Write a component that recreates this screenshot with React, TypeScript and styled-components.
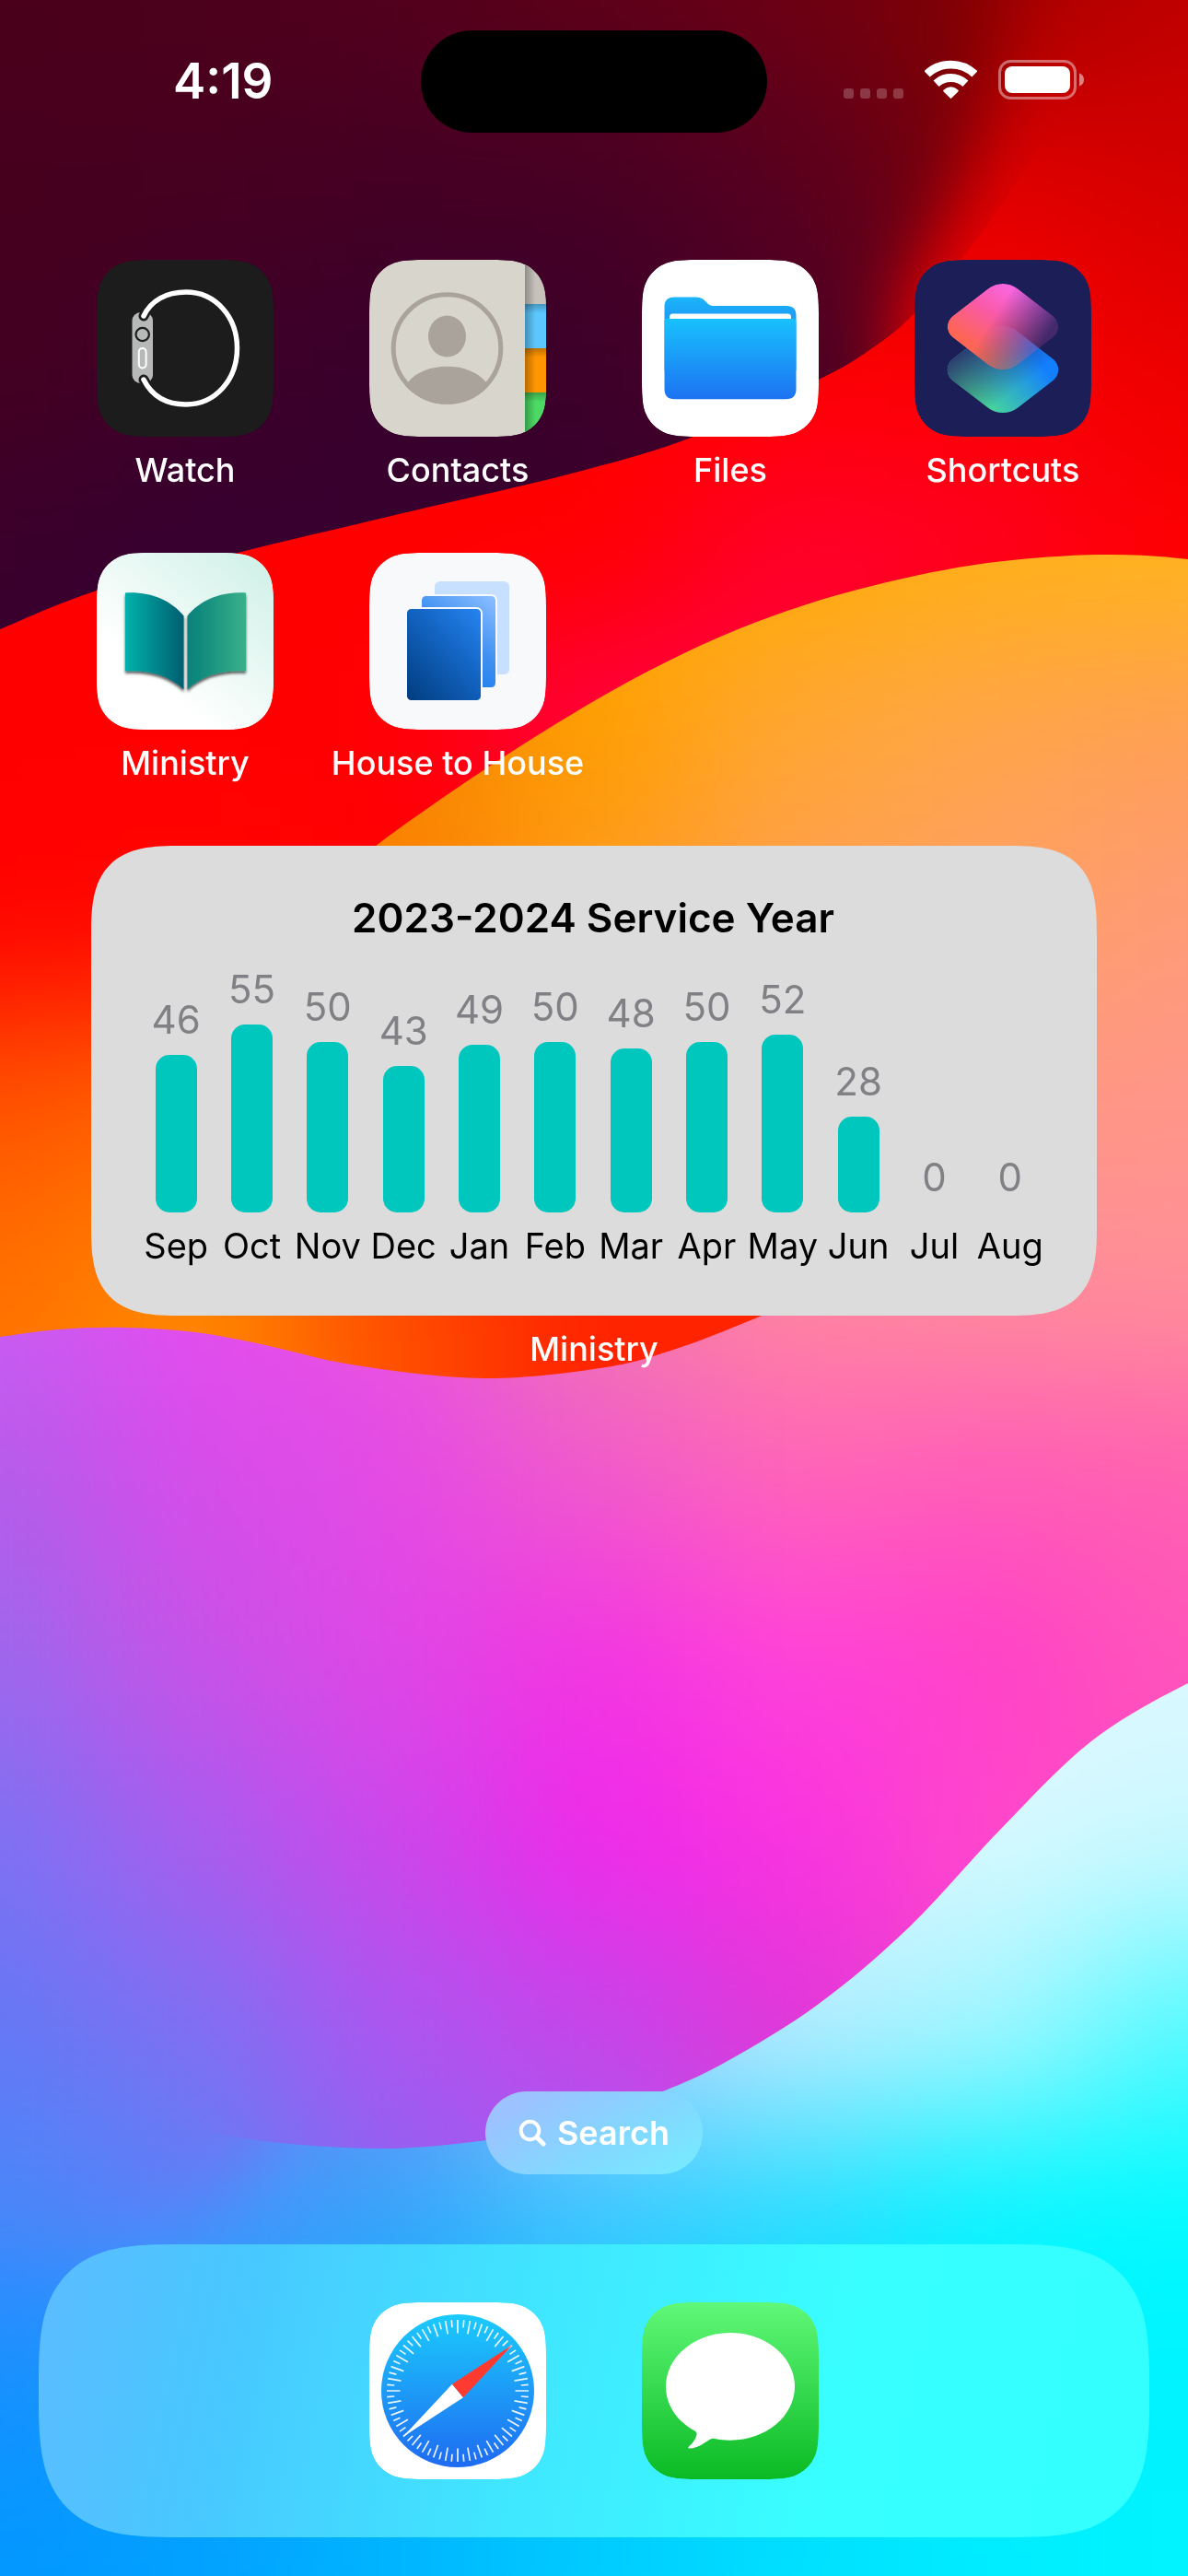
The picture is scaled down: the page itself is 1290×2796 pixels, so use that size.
import React from "react";
import styled, { createGlobalStyle, css } from "styled-components";

/* ---------- shared styles ---------- */

const GlobalStyle = createGlobalStyle`
  *, *::before, *::after { box-sizing: border-box; }
  html, body { margin: 0; padding: 0; }
  body {
    background: #1c9cff;
    font-family: Inter, "Liberation Sans", sans-serif;
    -webkit-font-smoothing: antialiased;
  }
  button { font: inherit; color: inherit; background: none; border: 0; padding: 0; cursor: pointer; }
`;

const smoothCorners = (radius: number, wide: number) => css`
  border-radius: ${radius}px;
  @supports (corner-shape: squircle) {
    border-radius: ${wide}px;
    corner-shape: superellipse(1.56);
  }
`;

/* ---------- wallpaper ---------- */

const WallpaperSvg = styled.svg`
  position: fixed;
  inset: 0;
  width: 100%;
  height: 100%;
  z-index: -1;
`;

const MESH_X = [-215, 0, 215, 430, 645, 860, 1075, 1290, 1505];

type MeshRow = { y: number; colors: string[] };

const row = (y: number, ...colors: string[]): MeshRow => ({ y, colors });

const embers: MeshRow[] = [
  row(-200, "#ff0000", "#ff0000", "#ff0000", "#ff0000", "#900000", "#a00000", "#c00000"),
  row(0, "#ff0000", "#ff0000", "#ff0000", "#ff0000", "#900000", "#a40000", "#c00000"),
  row(200, "#ff0000", "#ff0000", "#ff0000", "#ff0000", "#c80000", "#e40000", "#d40000"),
  row(400, "#ff0000", "#ff0000", "#ff0000", "#ff0000", "#ff0000", "#fc0000", "#ec0000"),
  row(600, "#ff0000", "#ff0000", "#ff0000", "#ff0000", "#ff002c", "#ff0020", "#ff0000"),
  row(800, "#ff0000", "#ff0000", "#ff0004", "#ff0048", "#ff0040", "#ff0000", "#ff0000"),
  row(1000, "#ff0200", "#ff0600", "#ff0000", "#ff0000", "#ff0000", "#ff0000", "#ff0000"),
  row(1200, "#ff5400", "#ff6800", "#ff3000", "#ff2000", "#ff2000", "#ff2000", "#ff2000"),
  row(1400, "#ff7000", "#ff8a00", "#ff4e00", "#ff2200", "#ff2400", "#ff2400", "#ff2400"),
  row(1600, "#ff7800", "#ff8a00", "#ff4e00", "#ff2200", "#ff2400", "#ff2400", "#ff2400"),
];

const dusk: MeshRow[] = [
  row(-200, "#4a001a", "#4c001a", "#54001a", "#600018", "#700010", "#800000", "#900000"),
  row(0, "#4a001a", "#4c001a", "#52001c", "#5e0018", "#6c0014", "#840000", "#900000"),
  row(200, "#46001e", "#460020", "#440024", "#460024", "#560020", "#7c0008", "#900000"),
  row(400, "#440020", "#3e0028", "#38002c", "#3c002a", "#4c0024", "#680018", "#900000"),
  row(600, "#3a002c", "#360030", "#36002e", "#38002c", "#3c002a", "#500020", "#900000"),
  row(800, "#3a0030", "#360030", "#36002e", "#38002c", "#3c002a", "#500020", "#900000"),
];

const sunset: MeshRow[] = [
  row(400, "#ff9000", "#ff9000", "#ffa000", "#ffa800", "#ffaa08", "#ffb018", "#ffb61a"),
  row(600, "#ff9000", "#ff9000", "#fc8c00", "#ffa800", "#ffaa08", "#ffb018", "#ffb41c"),
  row(800, "#ff8000", "#ff8000", "#f48200", "#ff9e00", "#ffa636", "#ffa44c", "#ff9e58"),
  row(1000, "#ff8000", "#ff8000", "#ff8000", "#ff9a20", "#ff9e50", "#ffa064", "#ff9a78"),
  row(1200, "#d060f0", "#e050e8", "#f060c0", "#ff8a80", "#ff9478", "#ff9680", "#ff968a"),
  row(1400, "#cc5cf4", "#e64cf0", "#ec54e0", "#f278ac", "#ff86a0", "#ff8c9c", "#ff8e98"),
  row(1600, "#b45cea", "#d64cea", "#e44ae4", "#f05acc", "#ff64b8", "#ff5cb8", "#ff60b0"),
  row(1800, "#9c68ec", "#c852e8", "#e046e6", "#f234e2", "#ff42da", "#ff40c8", "#ff56ba"),
  row(2000, "#7c72f4", "#a85cee", "#cc46ea", "#f028ea", "#fa32e0", "#ff48cc", "#ff4cc0"),
  row(2200, "#6478f4", "#7e70f2", "#ac56f0", "#c446ea", "#e036d8", "#f044cc", "#f044cc"),
  row(2400, "#4888fa", "#5c80f6", "#9060f0", "#a858f0", "#c84ce0", "#d044d8", "#d044d8"),
  row(2600, "#2890ff", "#4888fa", "#9060f0", "#a858f0", "#c84ce0", "#d044d8", "#d044d8"),
];

const lagoon: MeshRow[] = [
  row(1600, "#6478f4", "#6478f4", "#7080f4", "#a0c0ff", "#d8f6ff", "#dcf8ff", "#dcf8ff"),
  row(1800, "#6478f4", "#6478f4", "#7080f4", "#a0c0ff", "#d8f6ff", "#dcf8ff", "#dcf8ff"),
  row(2000, "#6478f4", "#6478f4", "#7080f4", "#a8c4ff", "#d0f4ff", "#d8f8ff", "#ccf8ff"),
  row(2200, "#5e7ef6", "#6880f6", "#7090f6", "#a4caff", "#b8ecff", "#a4f6ff", "#54faff"),
  row(2400, "#4088fc", "#4892fa", "#38a4fa", "#40c8ff", "#2cdcff", "#08f4ff", "#00fcff"),
  row(2600, "#1490ff", "#10a0ff", "#00b0ff", "#00c8ff", "#00dcff", "#00f0ff", "#00f2ff"),
  row(2800, "#0098ff", "#00a0ff", "#00b6ff", "#00ccff", "#00e0ff", "#00ecff", "#00f4ff"),
  row(3000, "#0098ff", "#00a0ff", "#00b6ff", "#00ccff", "#00e0ff", "#00ecff", "#00f4ff"),
];

type Point = [number, number];

/* Catmull-Rom spline through the given points, as cubic segments. */
function spline(points: Point[]): string {
  let d = `M${points[0][0]} ${points[0][1]}`;
  for (let i = 0; i < points.length - 1; i++) {
    const p0 = points[Math.max(i - 1, 0)];
    const p1 = points[i];
    const p2 = points[i + 1];
    const p3 = points[Math.min(i + 2, points.length - 1)];
    const c1 = [p1[0] + (p2[0] - p0[0]) / 6, p1[1] + (p2[1] - p0[1]) / 6];
    const c2 = [p2[0] - (p3[0] - p1[0]) / 6, p2[1] - (p3[1] - p1[1]) / 6];
    d += `C${c1[0]} ${c1[1]} ${c2[0]} ${c2[1]} ${p2[0]} ${p2[1]}`;
  }
  return d;
}

const duskEdge: Point[] = [
  [0, 683], [105, 641], [258, 600], [425, 560], [620, 514], [753, 474], [889, 412], [944, 380], [993, 340], [1060, 260], [1130, 160],
];

const sunsetTop: Point[] = [
  [1390, 625], [1290, 607], [1194, 602], [1081, 610], [985, 627], [882, 654], [780, 692], [684, 739], [600, 788], [528, 834], [462, 879], [407, 919], [360, 960],
];

const sunsetBottom: Point[] = [
  [900, 1396], [827, 1428], [740, 1462], [658, 1484], [526, 1496], [387, 1482], [288, 1460], [212, 1446], [136, 1441], [64, 1443], [0, 1451],
];

const lagoonEdge: Point[] = [
  [1380, 1792], [1290, 1827], [1185, 1890], [1086, 1986], [987, 2092], [889, 2175], [790, 2237], [717, 2271], [625, 2303], [528, 2323], [403, 2332], [247, 2318], [110, 2280], [0, 2230],
];

function Mesh({ rows }: { rows: MeshRow[] }) {
  return (
    <g filter="url(#melt)">
      {rows.map(({ y, colors }) =>
        MESH_X.map((x, i) => (
          <rect
            key={`${x}-${y}`}
            x={x - 108}
            y={y - 100}
            width={217}
            height={202}
            fill={colors[Math.min(Math.max(i - 1, 0), colors.length - 1)]}
          />
        ))
      )}
    </g>
  );
}

function Wallpaper() {
  return (
    <WallpaperSvg viewBox="0 0 1290 2796" preserveAspectRatio="none" aria-hidden="true">
      <defs>
        <filter id="melt" filterUnits="userSpaceOnUse" x="-330" y="-310" width="1950" height="3430" colorInterpolationFilters="sRGB">
          <feGaussianBlur stdDeviation="80" />
        </filter>
        <filter id="feather" filterUnits="userSpaceOnUse" x="-500" y="-400" width="2400" height="3700">
          <feGaussianBlur stdDeviation="38" />
        </filter>
        <mask id="duskFade" maskUnits="userSpaceOnUse" x="0" y="-10" width="1290" height="800">
          <path
            d="M-300 -300H1110L1090 0C1084 110 1050 200 1010 270C985 315 960 345 990 440L1000 1000H-300Z"
            fill="#fff"
            filter="url(#feather)"
          />
        </mask>
        <mask id="lagoonFade" maskUnits="userSpaceOnUse" x="0" y="1700" width="1290" height="1100">
          <path d="M-400 2440H60C180 2430 250 2390 290 2290V1500H1800V3200H-400Z" fill="#fff" filter="url(#feather)" />
        </mask>
        <clipPath id="duskShape">
          <path d={`${spline(duskEdge)}L1290 150V0H0Z`} />
        </clipPath>
        <clipPath id="sunsetShape">
          <path d={`${spline(sunsetTop)}L900 1396${spline(sunsetBottom).replace("M900 1396", "")}V2796H1390Z`} />
        </clipPath>
        <clipPath id="lagoonShape">
          <path d={`${spline(lagoonEdge)}V2796H1380Z`} />
        </clipPath>
      </defs>
      <Mesh rows={embers} />
      <g clipPath="url(#duskShape)">
        <g mask="url(#duskFade)">
          <Mesh rows={dusk} />
        </g>
      </g>
      <g clipPath="url(#sunsetShape)">
        <Mesh rows={sunset} />
      </g>
      <g clipPath="url(#lagoonShape)">
        <g mask="url(#lagoonFade)">
          <Mesh rows={lagoon} />
        </g>
      </g>
    </WallpaperSvg>
  );
}

/* ---------- status bar ---------- */

const StatusRow = styled.header`
  display: grid;
  grid-template-columns: 1fr 376px 1fr;
  align-items: center;
  height: 111px;
  color: #fff;
`;

const Clock = styled.time`
  padding: 0 0 2px 188px;
  font-size: 53px;
  font-weight: 600;
  line-height: 60px;
`;

const Island = styled.div`
  height: 111px;
  border-radius: 56px;
  background: #000;
`;

const Indicators = styled.div`
  display: flex;
  align-items: flex-end;
  justify-content: flex-end;
  gap: 23px;
  padding: 0 113px 4px 0;
`;

function StatusBar() {
  return (
    <StatusRow>
      <Clock dateTime="04:19">4:19</Clock>
      <Island />
      <Indicators>
        <svg width="65" height="12" viewBox="0 0 65 12" role="img" aria-label="No signal">
          {[0, 18, 36, 54].map((x) => (
            <rect key={x} x={x} y="0" width="11" height="11" rx="3" fill="#fff" fillOpacity=".22" />
          ))}
        </svg>
        <svg width="57" height="43" viewBox="0 0 57 43" role="img" aria-label="Wi-Fi">
          <g fill="none" stroke="#fff" strokeWidth="8.8">
            <path d="M2.6 15.4A37.6 37.6 0 0 1 54.4 15.4" />
            <path d="M12.6 25.8A23.2 23.2 0 0 1 44.4 25.8" />
          </g>
          <path d="M20.6 34.6Q19.6 33.4 20.8 32.4Q28.5 26 36.2 32.4Q37.4 33.4 36.4 34.6L29.2 41.6Q28.5 42.3 27.8 41.6Z" fill="#fff" />
        </svg>
        <svg width="93" height="43" viewBox="0 0 93 43" role="img" aria-label="Battery full">
          <rect x="1.5" y="1.5" width="82" height="40" rx="12" fill="none" stroke="#fff" strokeOpacity=".42" strokeWidth="3" />
          <rect x="7" y="7" width="71" height="29" rx="8" fill="#fff" />
          <path d="M88 14.5C91 15.5 93 18 93 21.5S91 27.5 88 28.5Z" fill="#fff" fillOpacity=".5" />
        </svg>
      </Indicators>
    </StatusRow>
  );
}

/* ---------- app icons ---------- */

const TILE =
  "M65.7 0H126.3C145.2 0 154.7 0 164.8 3.2C176 7.3 184.7 16 188.8 27.2C192 37.3 192 46.8 192 65.7V126.3C192 145.2 192 154.7 188.8 164.8C184.7 176 176 184.7 164.8 188.8C154.7 192 145.2 192 126.3 192H65.7C46.8 192 37.3 192 27.2 188.8C16 184.7 7.3 176 3.2 164.8C0 154.7 0 145.2 0 126.3V65.7C0 46.8 0 37.3 3.2 27.2C7.3 16 16 7.3 27.2 3.2C37.3 0 46.8 0 65.7 0Z";

const TileSvg = styled.svg`
  display: block;
  width: 192px;
  height: 192px;
  flex: none;
`;

function Tile({ id, fill, children }: { id: string; fill: string; children: React.ReactNode }) {
  return (
    <TileSvg viewBox="0 0 192 192" aria-hidden="true">
      <defs>
        <clipPath id={`${id}-tile`}>
          <path d={TILE} />
        </clipPath>
      </defs>
      <g clipPath={`url(#${id}-tile)`}>
        <path d={TILE} fill={fill} />
        {children}
      </g>
    </TileSvg>
  );
}

const WatchIcon = () => (
  <Tile id="watch" fill="#1c1c1c">
    <rect x="38.5" y="57" width="22.5" height="77" rx="9" fill="#b7b9b9" />
    <path d="M51 61L60 44M51 130L60 146" stroke="#1c1c1c" strokeWidth="11" strokeLinecap="round" />
    <path
      d="M51 61C59 44 76 35 97 35C129 35 152.5 62 152.5 96C152.5 130 129 157 97 157C76 157 60 148 51 130"
      fill="none"
      stroke="#fff"
      strokeWidth="5.5"
      strokeLinecap="round"
    />
    <circle cx="49.7" cy="81" r="7.2" fill="none" stroke="#1c1c1c" strokeWidth="2.2" />
    <rect x="45.8" y="96" width="7.8" height="21.5" rx="3.9" fill="none" stroke="#fff" strokeWidth="2" />
  </Tile>
);

const ContactsIcon = () => (
  <Tile id="contacts" fill="#d8d5cc">
    <defs>
      <linearGradient id="tabSide" x1="0" x2="1" y1="0" y2="0">
        <stop offset="0" stopColor="#000" stopOpacity=".28" />
        <stop offset=".5" stopColor="#000" stopOpacity="0" />
      </linearGradient>
      <linearGradient id="tabTop" x1="0" x2="0" y1="0" y2="1">
        <stop offset="0" stopColor="#000" stopOpacity=".25" />
        <stop offset="1" stopColor="#000" stopOpacity="0" />
      </linearGradient>
    </defs>
    {["#c6c2bb", "#5cc7fd", "#ff9500", "#4cd964"].map((fill, i) => (
      <g key={fill}>
        <rect x="169" y={i * 48} width="23" height="48" fill={fill} />
        {i > 0 && <rect x="169" y={i * 48} width="23" height="10" fill="url(#tabTop)" />}
      </g>
    ))}
    <rect x="169" y="0" width="23" height="192" fill="url(#tabSide)" />
    <circle cx="84.5" cy="96" r="58.3" fill="none" stroke="#aaa39b" strokeWidth="5" />
    <ellipse cx="84.5" cy="83" rx="20.5" ry="22.5" fill="#aaa39b" />
    <path d="M42 133C51 122 66 115.8 84.5 115.8S118 122 127 133L130.5 136C118 150 103 156.8 84.5 156.8S50 149 38.5 136Z" fill="#aaa39b" />
  </Tile>
);

const FilesIcon = () => (
  <Tile id="files" fill="#fff">
    <defs>
      <linearGradient id="folderBack" x1="0" x2="0" y1="0" y2="1">
        <stop offset="0" stopColor="#1bb5fa" />
        <stop offset=".25" stopColor="#1c9ff6" />
      </linearGradient>
      <linearGradient id="folderFront" x1="0" x2="0" y1="0" y2="1">
        <stop offset="0" stopColor="#18c1fd" />
        <stop offset="1" stopColor="#1d72f2" />
      </linearGradient>
    </defs>
    <path d="M24.5 51C24.5 44 28 40.5 35 40.5H59C63 40.5 65 41.5 68 44L72 48C74 49.6 75.5 50 79 50H157C164 50 167.5 53.5 167.5 60V120H24.5Z" fill="url(#folderBack)" />
    <path d="M30 68V62Q30 58.5 33.5 58.5H158.5Q162 58.5 162 62V68Z" fill="#fff" />
    <path d="M24.5 67Q24.5 64 28 64H164Q167.5 64 167.5 67V140C167.5 147.5 164 151.3 156.5 151.3H35.5C28 151.3 24.5 147.5 24.5 140Z" fill="url(#folderFront)" />
  </Tile>
);

const DIAMOND =
  "M-16 -41.4C-7 -48.5 7 -48.5 16 -41.4L54.8 -11.4C62 -5 62 5 54.8 11.4L16 41.4C7 48.5 -7 48.5 -16 41.4L-54.8 11.4C-62 5 -62 -5 -54.8 -11.4Z";

const ShortcutsIcon = () => (
  <Tile id="shortcuts" fill="#1c1e58">
    <defs>
      <linearGradient id="seaHue" gradientUnits="userSpaceOnUse" x1="-14" y1="44" x2="44" y2="-4">
        <stop offset="0" stopColor="#48d69a" />
        <stop offset="1" stopColor="#127fff" />
      </linearGradient>
      <linearGradient id="seaShade" gradientUnits="userSpaceOnUse" x1="-38" y1="-28" x2="6" y2="28">
        <stop offset="0" stopColor="#29306a" stopOpacity=".95" />
        <stop offset="1" stopColor="#29306a" stopOpacity="0" />
      </linearGradient>
      <linearGradient id="coralHue" gradientUnits="userSpaceOnUse" x1="-36" y1="18" x2="6" y2="-44">
        <stop offset="0" stopColor="#fd6554" />
        <stop offset=".55" stopColor="#f95aa8" />
        <stop offset="1" stopColor="#f966e0" />
      </linearGradient>
      <linearGradient id="coralFade" gradientUnits="userSpaceOnUse" x1="-10" y1="-10" x2="40" y2="22">
        <stop offset="0" stopColor="#fff" />
        <stop offset="1" stopColor="#fff" stopOpacity=".18" />
      </linearGradient>
      <mask id="coralMask" maskUnits="userSpaceOnUse" x="-70" y="-60" width="140" height="120">
        <path d={DIAMOND} fill="url(#coralFade)" />
      </mask>
    </defs>
    <g transform="translate(96 119.3)">
      <path d={DIAMOND} fill="url(#seaHue)" />
      <path d={DIAMOND} fill="url(#seaShade)" />
    </g>
    <g transform="translate(96 72.7)">
      <path d={DIAMOND} fill="url(#coralHue)" mask="url(#coralMask)" />
    </g>
  </Tile>
);

const MinistryIcon = () => (
  <Tile id="ministry" fill="#fff">
    <defs>
      <linearGradient id="mint" x1=".35" y1=".75" x2="1" y2="0">
        <stop offset="0" stopColor="#fff" />
        <stop offset="1" stopColor="#cdf0e6" />
      </linearGradient>
      <linearGradient id="pageLeft">
        <stop offset="0" stopColor="#00b1ab" />
        <stop offset="1" stopColor="#005e70" />
      </linearGradient>
      <linearGradient id="pageRight">
        <stop offset="0" stopColor="#06807a" />
        <stop offset="1" stopColor="#39b089" />
      </linearGradient>
      <filter id="bookShadow" x="-20%" y="-20%" width="140%" height="150%">
        <feDropShadow dx="0" dy="2.5" stdDeviation="1.8" floodColor="#000" floodOpacity=".65" />
      </filter>
    </defs>
    <rect width="192" height="192" fill="url(#mint)" />
    <g filter="url(#bookShadow)">
      <path d="M31 43.5C58 42 80 51 94.5 68.5V148.5C79 133 56 127 31 128.5Z" fill="url(#pageLeft)" />
      <path d="M162 43.5C135 42 113 51 98.5 68.5V148.5C114 133 137 127 162 128.5Z" fill="url(#pageRight)" />
    </g>
  </Tile>
);

const HouseIcon = () => (
  <Tile id="house" fill="#f8f9fb">
    <defs>
      <linearGradient id="cardMid" x1=".3" y1="1" x2=".9" y2="0">
        <stop offset="0" stopColor="#1176ea" />
        <stop offset=".5" stopColor="#3f90f1" />
        <stop offset="1" stopColor="#88bdff" />
      </linearGradient>
      <linearGradient id="cardFront" x1="0" y1="1" x2=".9" y2="0">
        <stop offset="0" stopColor="#003c7e" />
        <stop offset=".6" stopColor="#1364c2" />
        <stop offset="1" stopColor="#2482ec" />
      </linearGradient>
    </defs>
    <rect x="71" y="31" width="81" height="101" rx="5.5" fill="#c8e0ff" />
    <rect x="56" y="46" width="82" height="101" rx="5.5" fill="url(#cardMid)" stroke="#f8f9fb" strokeWidth="2" />
    <rect x="40" y="60" width="82" height="101" rx="5.5" fill="url(#cardFront)" stroke="#f8f9fb" strokeWidth="2" />
  </Tile>
);

const SafariIcon = () => (
  <Tile id="safari" fill="#fff">
    <defs>
      <linearGradient id="dial" x1="0" x2="0" y1="0" y2="1">
        <stop offset="0" stopColor="#1bcbfd" />
        <stop offset="1" stopColor="#1e6bf1" />
      </linearGradient>
    </defs>
    <circle cx="96" cy="96" r="83" fill="url(#dial)" />
    <g stroke="#fff" strokeOpacity=".9" strokeWidth="1.7">
      {Array.from({ length: 72 }, (_, i) => (
        <line key={i} x1="96" x2="96" y1="19" y2={i % 2 ? 27 : 33.5} transform={`rotate(${i * 5} 96 96)`} />
      ))}
    </g>
    <path d="M36.5 146L90 88.7L102 103.3Z" fill="#fff" />
    <path d="M155.5 46L90 88.7L102 103.3Z" fill="#ff3b30" />
  </Tile>
);

const MessagesIcon = () => (
  <Tile id="messages" fill="url(#leaf)">
    <defs>
      <linearGradient id="leaf" x1="0" x2="0" y1="0" y2="1">
        <stop offset="0" stopColor="#60f878" />
        <stop offset="1" stopColor="#0aba24" />
      </linearGradient>
    </defs>
    <path
      d="M96 33C134.7 33 166 59 166 91.3S134.7 149.7 96 149.7C90 149.7 84.5 149.2 79 148C77 147.6 75.5 148 73.5 149C66 154 59 158.5 51.5 158.5C50 158.5 50 157.5 51 156.5C55 153 58.5 148.5 59.5 143.5C59.8 141.5 59 140.5 57.5 139.5C38 129 26 111.5 26 91.3C26 59 57.3 33 96 33Z"
      fill="#fff"
    />
  </Tile>
);

/* ---------- home screen ---------- */

const Screen = styled.div`
  position: relative;
  z-index: 0;
  display: flex;
  flex-direction: column;
  min-height: 100vh;
  padding: 33px 0 42px;
`;

const Page = styled.main`
  display: flex;
  flex-direction: column;
  gap: 68px;
  padding: 138px 99px 0;
`;

const AppGrid = styled.nav`
  display: grid;
  grid-template-columns: repeat(4, 192px);
  justify-content: space-between;
  row-gap: 68px;
  padding: 0 6px;
`;

const AppButton = styled.button`
  display: flex;
  flex-direction: column;
  align-items: center;
  gap: 14px;
`;

const labelText = css`
  font-size: 36px;
  font-weight: 500;
  line-height: 44px;
  color: #fff;
  white-space: nowrap;
`;

const AppLabel = styled.span`
  ${labelText}
`;

const apps = [
  { name: "Watch", Icon: WatchIcon },
  { name: "Contacts", Icon: ContactsIcon },
  { name: "Files", Icon: FilesIcon },
  { name: "Shortcuts", Icon: ShortcutsIcon },
  { name: "Ministry", Icon: MinistryIcon },
  { name: "House to House", Icon: HouseIcon },
];

/* ---------- widget ---------- */

const Widget = styled.figure`
  display: flex;
  flex-direction: column;
  gap: 14px;
  margin: 0;
`;

const WidgetCaption = styled.figcaption`
  ${labelText}
  text-align: center;
`;

const WidgetCard = styled.section`
  display: flex;
  flex-direction: column;
  gap: 26px;
  padding: 50px 53px 52px 51px;
  background: #dcdcdc;
  ${smoothCorners(70, 98)}
`;

const WidgetTitle = styled.h2`
  margin: 0;
  font-size: 44px;
  font-weight: 600;
  line-height: 56px;
  text-align: center;
  color: #000;
`;

const Chart = styled.ol`
  display: grid;
  grid-template-columns: repeat(12, minmax(0, 1fr));
  align-items: end;
  margin: 0;
  padding: 0;
  list-style: none;
`;

const Column = styled.li`
  display: flex;
  flex-direction: column;
  align-items: center;
  line-height: 48px;
  white-space: nowrap;
`;

const Value = styled.span`
  font-size: 42px;
  color: #808085;
`;

const Bar = styled.span`
  width: 45px;
  margin: 14px 0 12px;
  border-radius: 15px;
  background: #00c7be;
`;

const Month = styled.span`
  font-size: 38px;
  color: #000;
`;

const TALLEST_BAR = 204;

const serviceYear = [
  { month: "Sep", hours: 46 },
  { month: "Oct", hours: 55 },
  { month: "Nov", hours: 50 },
  { month: "Dec", hours: 43 },
  { month: "Jan", hours: 49 },
  { month: "Feb", hours: 50 },
  { month: "Mar", hours: 48 },
  { month: "Apr", hours: 50 },
  { month: "May", hours: 52 },
  { month: "Jun", hours: 28 },
  { month: "Jul", hours: 0 },
  { month: "Aug", hours: 0 },
];

function ServiceYearWidget() {
  const peak = Math.max(...serviceYear.map((entry) => entry.hours));
  return (
    <Widget>
      <WidgetCard>
        <WidgetTitle>2023-2024 Service Year</WidgetTitle>
        <Chart>
          {serviceYear.map(({ month, hours }) => (
            <Column key={month}>
              <Value>{hours}</Value>
              <Bar style={{ height: Math.round((hours / peak) * TALLEST_BAR) }} />
              <Month>{month}</Month>
            </Column>
          ))}
        </Chart>
      </WidgetCard>
      <WidgetCaption>Ministry</WidgetCaption>
    </Widget>
  );
}

/* ---------- search and dock ---------- */

const Footer = styled.footer`
  display: flex;
  flex-direction: column;
  align-items: center;
  gap: 76px;
  margin-top: auto;
  padding: 76px 42px 0;
`;

const SearchButton = styled.button`
  display: flex;
  align-items: center;
  gap: 12px;
  height: 90px;
  padding: 0 36px;
  border-radius: 45px;
  background: linear-gradient(150deg, #9cc2ff 15%, #84d6ff 55%, #78e8ff 90%);
  color: #fff;
  font-size: 36px;
  font-weight: 600;
  line-height: 44px;
`;

const Dock = styled.nav`
  display: flex;
  justify-content: center;
  gap: 104px;
  align-self: stretch;
  padding: 63px;
  background: linear-gradient(102deg, #5cbcff 0%, #48c8ff 18%, #40e6ff 44%, #38ffff 72%, #32ffff 100%);
  ${smoothCorners(108, 150)}
`;

const DockButton = styled.button`
  display: block;
`;

export default function App() {
  return (
    <>
      <GlobalStyle />
      <Screen>
        <Wallpaper />
        <StatusBar />
        <Page>
          <AppGrid aria-label="Apps">
            {apps.map(({ name, Icon }) => (
              <AppButton key={name} type="button">
                <Icon />
                <AppLabel>{name}</AppLabel>
              </AppButton>
            ))}
          </AppGrid>
          <ServiceYearWidget />
        </Page>
        <Footer>
          <SearchButton type="button">
            <svg width="30" height="30" viewBox="0 0 30 30" fill="none" stroke="#fff" aria-hidden="true">
              <circle cx="12.5" cy="12.5" r="9.8" strokeWidth="4" />
              <path d="M20 20L27 27" strokeWidth="5" strokeLinecap="round" />
            </svg>
            Search
          </SearchButton>
          <Dock aria-label="Dock">
            <DockButton type="button" aria-label="Safari">
              <SafariIcon />
            </DockButton>
            <DockButton type="button" aria-label="Messages">
              <MessagesIcon />
            </DockButton>
          </Dock>
        </Footer>
      </Screen>
    </>
  );
}
